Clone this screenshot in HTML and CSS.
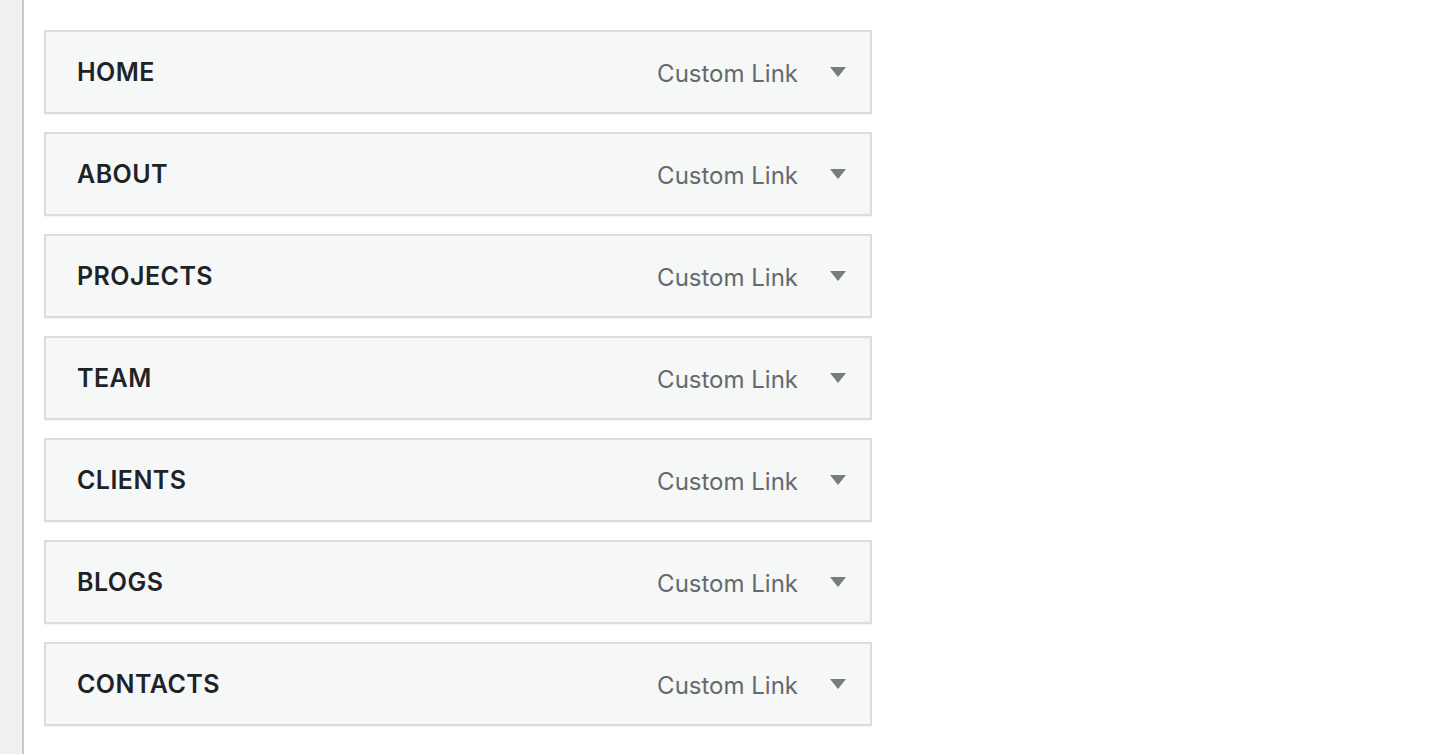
FILE: index.html
```html
<!DOCTYPE html>
<html>
<head>
<meta charset="utf-8">
<link rel="stylesheet" href="styles.css">
</head>
<body>
<div class="layout">
  <div class="sidebar"></div>
  <main class="content">
    <ul class="menu">
      <li class="item"><span class="title">HOME</span><span class="type">Custom Link</span><span class="arrow"></span></li>
      <li class="item"><span class="title">ABOUT</span><span class="type">Custom Link</span><span class="arrow"></span></li>
      <li class="item"><span class="title">PROJECTS</span><span class="type">Custom Link</span><span class="arrow"></span></li>
      <li class="item"><span class="title">TEAM</span><span class="type">Custom Link</span><span class="arrow"></span></li>
      <li class="item"><span class="title">CLIENTS</span><span class="type">Custom Link</span><span class="arrow"></span></li>
      <li class="item"><span class="title">BLOGS</span><span class="type">Custom Link</span><span class="arrow"></span></li>
      <li class="item"><span class="title">CONTACTS</span><span class="type">Custom Link</span><span class="arrow"></span></li>
    </ul>
  </main>
</div>
</body>
</html>
```

FILE: styles.css
```css
html, body {
  margin: 0;
  padding: 0;
  height: 100%;
  background: #fff;
  font-family: Inter, "Liberation Sans", sans-serif;
}
.layout {
  display: flex;
  height: 754px;
  overflow: hidden;
}
.sidebar {
  width: 22px;
  flex: none;
  background: #f0f0f1;
  border-right: 2px solid #c9c9cc;
}
.content {
  flex: 1;
  padding: 30px 0 0 20px;
}
.menu {
  list-style: none;
  margin: 0;
  padding: 0;
  width: 828px;
  display: flex;
  flex-direction: column;
  gap: 18px;
}
.item {
  box-sizing: border-box;
  height: 84px;
  display: flex;
  align-items: center;
  background: #f6f7f7;
  border: 2px solid #dcdcde;
  box-shadow: 0 1px 1px rgba(0,0,0,0.04);
  padding: 0 24px 0 31px;
}
.title {
  flex: 1;
  font-size: 25px;
  font-weight: 600;
  color: #1d2327;
  letter-spacing: 0.45px;
}
.type {
  font-size: 24px;
  color: #646970;
  margin-right: 32px;
  padding-top: 2px;
}
.arrow {
  width: 0;
  height: 0;
  border-left: 8px solid transparent;
  border-right: 8px solid transparent;
  border-top: 10px solid #787c82;
  margin-top: -1px;
}
```
